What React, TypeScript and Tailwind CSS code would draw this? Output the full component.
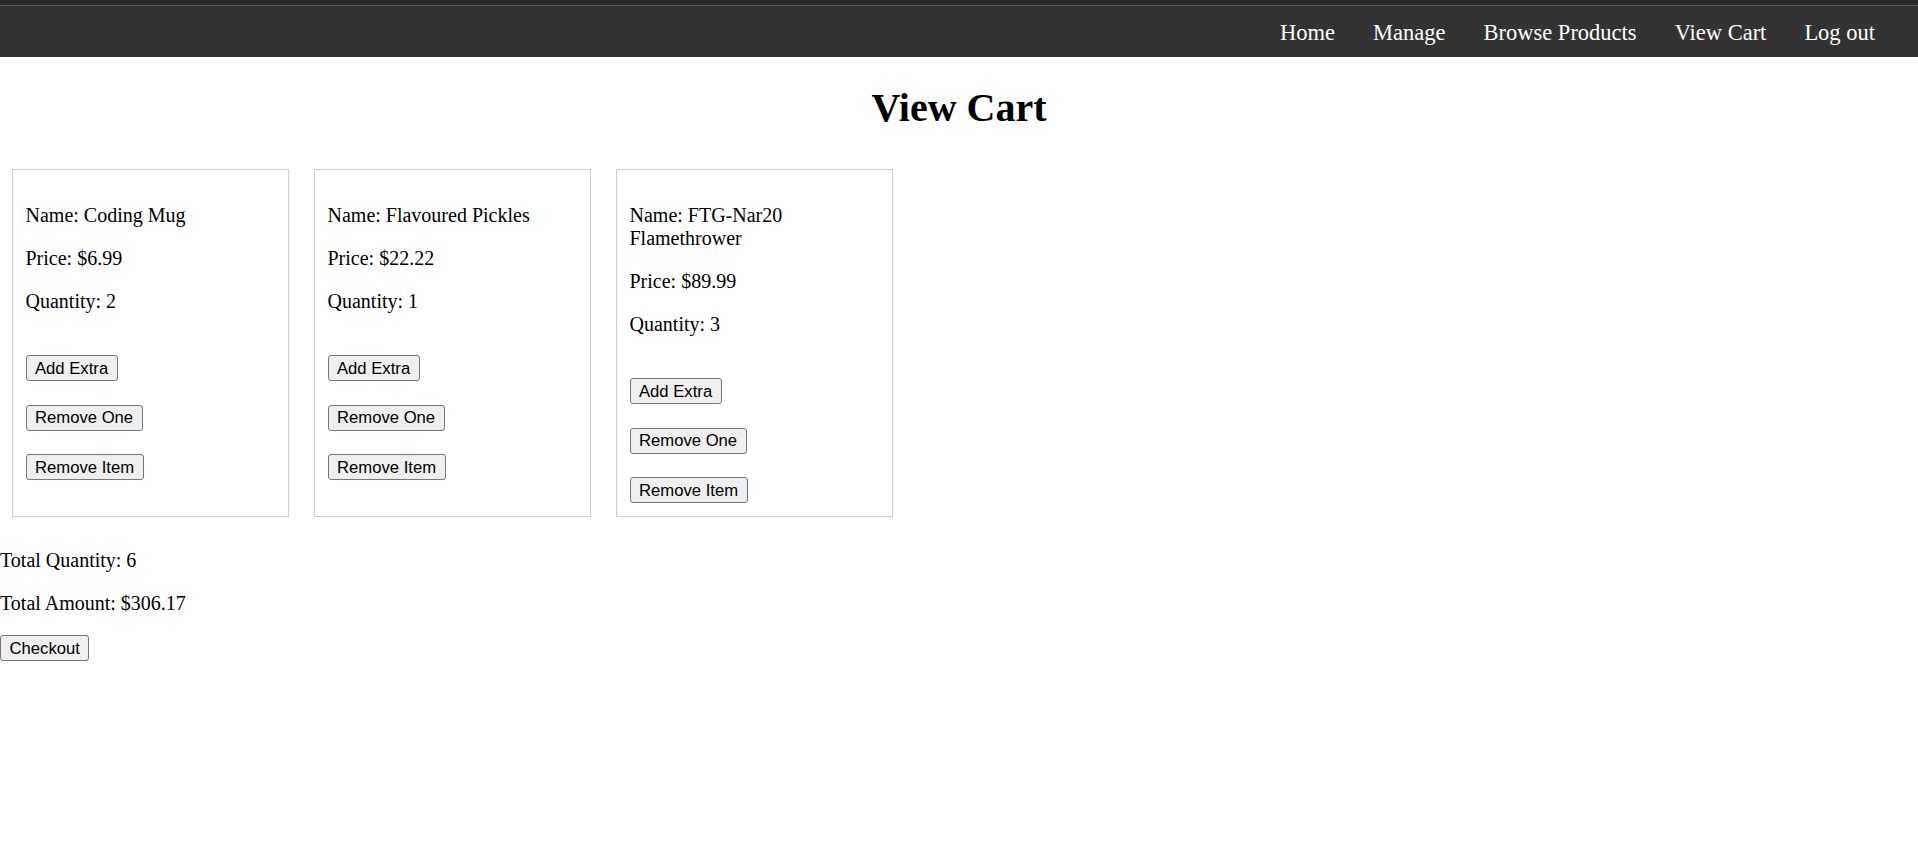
const navLinks = ['Home', 'Manage', 'Browse Products', 'View Cart', 'Log out'];

type CartItem = {
  name: string;
  price: string;
  quantity: number;
};

const cartItems: CartItem[] = [
  { name: 'Coding Mug', price: '$6.99', quantity: 2 },
  { name: 'Flavoured Pickles', price: '$22.22', quantity: 1 },
  { name: 'FTG-Nar20 Flamethrower', price: '$89.99', quantity: 3 },
];

const buttonClass =
  "self-start rounded-[3px] border border-[#767676] bg-[#efefef] px-[8.5px] py-[2.5px] font-['Liberation_Sans',Arial,sans-serif] text-[16.67px] leading-[19px] text-black";

function CartCard({ item }: { item: CartItem }) {
  return (
    <div className="w-[277px] border border-[#cccccc] p-[12.5px]">
      <p className="mt-[21px] mb-[20px] text-[20px] leading-[23px]">Name: {item.name}</p>
      <p className="my-[20px] text-[20px] leading-[23px]">Price: {item.price}</p>
      <p className="my-[20px] text-[20px] leading-[23px]">Quantity: {item.quantity}</p>
      <div className="flex flex-col gap-[23.5px] pt-[22.5px]">
        <button type="button" className={buttonClass}>Add Extra</button>
        <button type="button" className={buttonClass}>Remove One</button>
        <button type="button" className={buttonClass}>Remove Item</button>
      </div>
    </div>
  );
}

export default function App() {
  return (
    <div className="min-h-[853px] bg-white font-['Liberation_Serif','Times_New_Roman',serif] text-black">
      <div className="h-[5px] bg-[#2b2b2b]" />
      <div className="h-[1px] bg-[#555555]" />
      <nav className="flex justify-end gap-[38px] bg-[#333333] pr-[43px] pt-[13.5px] pb-[11.5px]">
        {navLinks.map((link) => (
          <a key={link} href="#" className="text-[22.5px] leading-[26px] text-white">
            {link}
          </a>
        ))}
      </nav>

      <h1 className="mt-[28.5px] mb-[27px] text-center text-[40px] font-bold leading-[44px]">View Cart</h1>

      <div className="flex items-stretch gap-[25px] py-[12.5px] pl-[12px] pr-[12.5px]">
        {cartItems.map((item) => (
          <CartCard key={item.name} item={item} />
        ))}
      </div>

      <p className="mt-[20px] text-[20px] leading-[23px]">Total Quantity: 6</p>
      <p className="my-[20px] text-[20px] leading-[23px]">Total Amount: $306.17</p>
      <button type="button" className={buttonClass}>Checkout</button>
    </div>
  );
}
